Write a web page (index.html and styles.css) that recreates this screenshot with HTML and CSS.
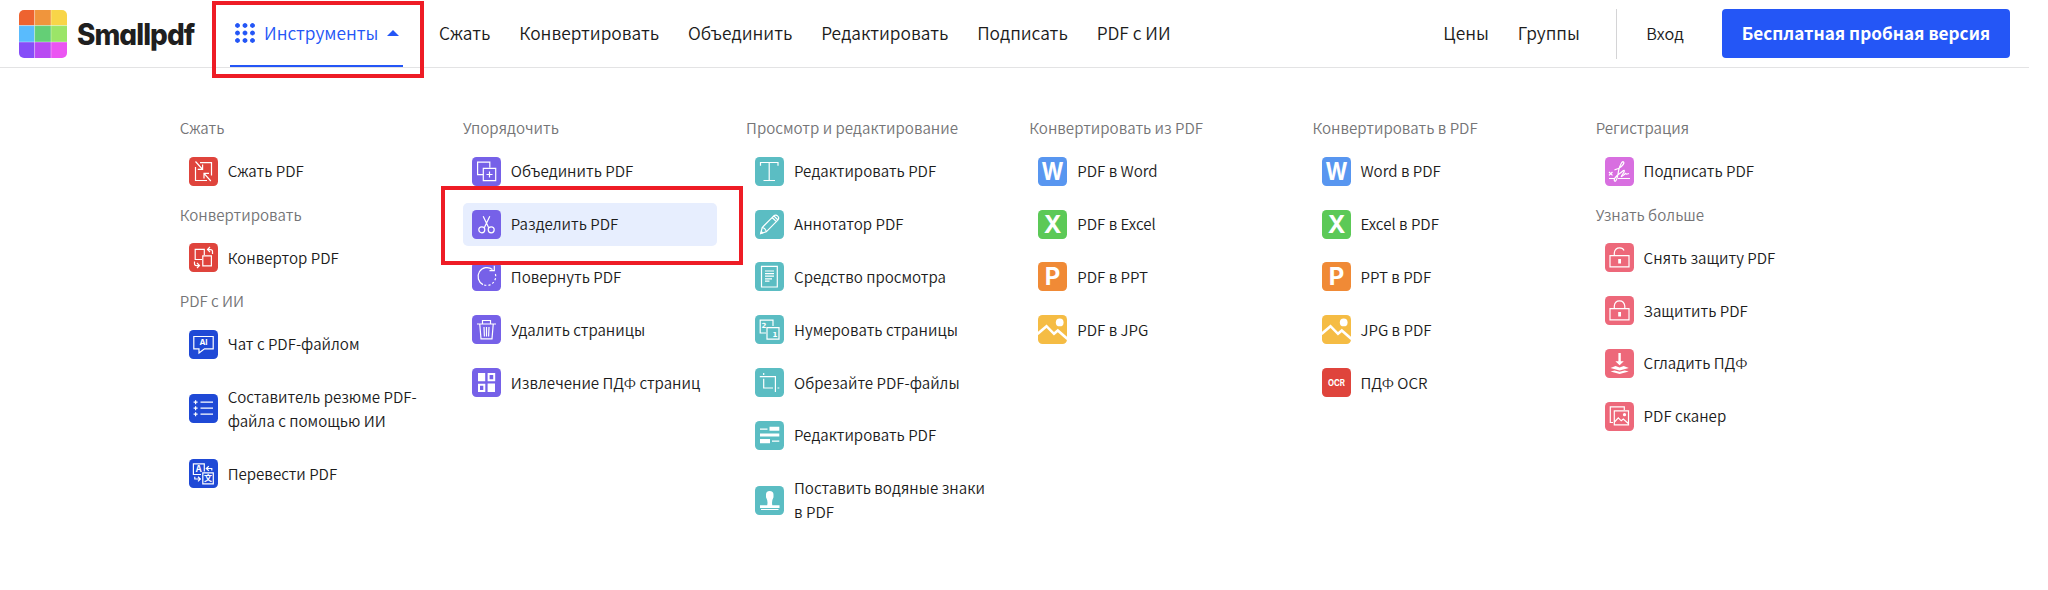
FILE: index.html
```
<!DOCTYPE html>
<html lang="ru">
<head>
<meta charset="utf-8">
<title>Smallpdf</title>
<link rel="stylesheet" href="styles.css">
</head>
<body>
<svg class="sprite" aria-hidden="true">
  <symbol id="compress" viewBox="0 0 29 29"><path d="M11 5.7H22.5V18.5M18 23.5H6.5V10M6.5 4.5L13.2 12M8.7 12.4H13.6V7.4M21.8 24L15.2 16.6M15 21.5V16.3H20"/></symbol>
  <symbol id="convert" viewBox="0 0 29 29"><path d="M13 16.5H6.2V6.3H15.3V12M13.8 12.8H22.4V22.8H13.8ZM23.5 11V8.5Q23.5 6.6 21.5 6.6H18.8M21 4L18.5 6.6L21 9M5.5 18.5V20.8Q5.5 22.6 7.5 22.6H10M8 20L10.5 22.6L8 25"/></symbol>
  <symbol id="chat" viewBox="0 0 29 29"><path d="M4.8 6.5H24.2V18.8H15.5L10 23V18.8H4.8Z"/><text x="14.5" y="15.4" class="g g-ai">AI</text></symbol>
  <symbol id="list" viewBox="0 0 29 29"><path d="M11.5 8.2H24M11.5 14.2H24M11.5 20.2H24M4.6 8.2H8.6M6.6 6.2V10.2M4.6 14.2H8.6M6.6 12.2V16.2M4.6 20.2H8.6M6.6 18.2V22.2"/></symbol>
  <symbol id="translate" viewBox="0 0 29 29"><path d="M12 15.5H4.4V4.8H15.3V12.4M13.8 13.8H24.3V24.8H13.8ZM22.8 11.4V9.5H17.5M19.8 7.2L17.3 9.5L19.8 11.8M5.8 17.8V20H11.2M9 17.7L11.4 20L9 22.4"/><text x="9.7" y="13.4" class="g g-tr">A</text><text x="19" y="22.4" class="g g-cjk">文</text></symbol>
  <symbol id="merge" viewBox="0 0 29 29"><path d="M11 17.7H5.6V5.2H17.8V10.5M11.3 11.3H23.7V23.7H11.3ZM14.5 17.5H20.5M17.5 14.5V20.5"/></symbol>
  <symbol id="split" viewBox="0 0 29 29"><path d="M11.2 6.2L16.7 17.8M17.8 6.2L12.3 17.8"/><circle cx="9.8" cy="19.8" r="3"/><circle cx="19.2" cy="19.8" r="3"/></symbol>
  <symbol id="rotate" viewBox="0 0 29 29"><path d="M11 22.6A9 9 0 1 1 20.5 7.4M22.3 3.8V8.6H17.5"/><path stroke-dasharray="2.2 2" d="M23.4 12A9 9 0 0 1 12 23"/></symbol>
  <symbol id="trash" viewBox="0 0 29 29"><path d="M5 9H24M10.5 8.5V5.5H18.5V8.5M7.8 9.5L9 23.8H20L21.2 9.5M12 12L12.4 21.5M14.5 12V21.5M17 12L16.6 21.5"/></symbol>
  <symbol id="extract" viewBox="0 0 29 29"><path class="fill" d="M6 5H13.2V13.2H6ZM15.6 15.6H23V24H15.6Z"/><path class="thick" d="M16.6 6H22.2V12.2H16.6ZM7 16.8H12.3V23H7Z"/></symbol>
  <symbol id="text" viewBox="0 0 29 29"><path d="M5.5 8.8V5.5H23V8.8M14.2 5.5V23.5M8.5 23.5H20"/></symbol>
  <symbol id="pencil" viewBox="0 0 29 29"><path d="M5.6 23.6L7.2 17.5L19 5.6Q21 4.2 22.8 6.2Q24.5 8 23 9.8L11.3 21.8ZM7.2 17.5Q10.5 18 11.3 21.8M17.2 7.5L21.3 11.6M18.8 5.8L23 10"/><path class="fill" d="M5.2 24L6.2 20.5L8.7 23Z"/></symbol>
  <symbol id="reader" viewBox="0 0 29 29"><path d="M6.5 4.4H22.3V25H6.5Z M10 9H19M10 11.6H19M10 14.2H19M10 16.8H17M10 19.2H14.5"/></symbol>
  <symbol id="number" viewBox="0 0 29 29"><path d="M11 18H5.2V5.2H18V11M12 12.6H24V24.2H12Z"/><text x="9" y="12.6" class="g g-n">2</text><text x="20" y="22.2" class="g g-n">1</text></symbol>
  <symbol id="crop" viewBox="0 0 29 29"><path d="M8.7 5V7M4.8 8.7H20.4V24M8.7 10.8V20H18M22.5 20H24.3"/></symbol>
  <symbol id="edit" viewBox="0 0 29 29"><path class="fill" d="M14.5 5.8H24.3V9.8H14.5ZM5 12.4H24.3V15.6H5ZM5 18H15V22.2H5ZM5 7.5H12.5V8.7H5ZM17 19.6H24.3V20.8H17Z"/></symbol>
  <symbol id="stamp" viewBox="0 0 29 29"><path class="fill" d="M5 22V19.2H12.2Q13.2 15 11 11.2V8.5Q11 5 14.6 5Q18.5 5 18.5 8.5V11.2Q16.4 15 17.3 19.2H24.5V22Z"/><path d="M6 23.5H23.5"/></symbol>
  <symbol id="word" viewBox="0 0 29 29"><text x="14.5" y="23" textLength="22" lengthAdjust="spacingAndGlyphs" class="g g-l">W</text></symbol>
  <symbol id="excel" viewBox="0 0 29 29"><text x="14.5" y="23" class="g g-l">X</text></symbol>
  <symbol id="ppt" viewBox="0 0 29 29"><text x="14.5" y="23" class="g g-l">P</text></symbol>
  <symbol id="jpg" viewBox="0 0 29 29"><circle class="fill" cx="21.7" cy="7.4" r="3.9"/><path class="ridge" d="M-.5 19L8.5 11.2L16 18.8L19.8 15.5L29.5 24"/></symbol>
  <symbol id="ocr" viewBox="0 0 29 29"><text x="14.5" y="18.2" textLength="17" lengthAdjust="spacingAndGlyphs" class="g g-ocr">OCR</text></symbol>
  <symbol id="sign" viewBox="0 0 29 29"><path d="M4 15L7.5 18.4M7.5 15L4 18.4M4 21.5H10M13 21.5H25M9.5 12.8C14 12 19.5 8 18.8 5.2C17.5 3 14.5 8.5 13.5 14C12.7 19.5 12.2 24.2 10 24.3C7.5 23 11.5 18.5 15 16.3C17.2 15 18 13.2 19.2 13.4C20.5 14.5 16 18.6 16.3 19.5C17.3 20.2 20.5 15.5 21 16.6C21.2 17.8 22.5 17 24 16.5"/></symbol>
  <symbol id="unlock" viewBox="0 0 29 29"><path d="M5 12.7H24V23.8H5ZM9.3 12.5V10Q9.8 4.8 14.7 4.8Q18 4.8 19 7.5"/><path class="fill" d="M13.2 16H16V20.5H13.2Z"/></symbol>
  <symbol id="lock" viewBox="0 0 29 29"><path d="M5 12.7H24V23.8H5ZM9.3 12.5V10Q9.8 4.8 14.5 4.8Q19.2 4.8 19.8 10V12.5"/><path class="fill" d="M13.2 16H16V20.5H13.2Z"/></symbol>
  <symbol id="flatten" viewBox="0 0 29 29"><path class="fill" d="M13.4 4H15.8V12.2H18.8L14.6 16.3L10.4 12.2H13.4ZM5.5 19L10.5 16.9L14.6 18.6L18.7 16.9L23.8 19L14.6 21.6ZM5.5 22.5L9.5 21.4L14.6 22.8L19.7 21.4L23.8 22.5L14.6 25Z"/></symbol>
  <symbol id="scan" viewBox="0 0 29 29"><path d="M8 20.5H5.3V4.8H19.3V8M9.3 8.8H23.5V22.8H9.3ZM9.5 20L13.3 15.8L16.2 18.8L18.3 17L23.3 21.5"/><circle class="fill" cx="19.5" cy="12.7" r="1.6"/></symbol>
</svg>

<header class="header">
  <div class="brand">
    <svg class="logo" viewBox="0 0 48 48">
      <path fill="#ee6330" d="M0 0H15.6V15.6H0z"/><path fill="#f0953c" d="M15.6 0H32V15.6H15.6z"/><path fill="#f8d548" d="M32 0H48V15.6H32z"/>
      <path fill="#59bbfd" d="M0 15.6H15.6V32H0z"/><path fill="#64cf76" d="M15.6 15.6H32V32H15.6z"/><path fill="#9be568" d="M32 15.6H48V32H32z"/>
      <path fill="#864ef8" d="M0 32H15.6V48H0z"/><path fill="#b94af2" d="M15.6 32H32V48H15.6z"/><path fill="#eb55f2" d="M32 32H48V48H32z"/>
      <path stroke="#fff" stroke-opacity=".45" stroke-width=".8" d="M15.6 0V48M32 0V48M0 15.6H48M0 32H48"/>
    </svg>
    <span class="wordmark">Smallpdf</span>
  </div>
  <div class="callout callout-tab">
    <a class="tab">
      <svg class="dots" viewBox="0 0 20 20"><path d="M2.5 1.9v1.2M10 1.9v1.2M17.5 1.9v1.2M2.5 9.4v1.2M10 9.4v1.2M17.5 9.4v1.2M2.5 16.9v1.2M10 16.9v1.2M17.5 16.9v1.2M1.9 2.5h1.2M9.4 2.5h1.2M16.9 2.5h1.2M1.9 10h1.2M9.4 10h1.2M16.9 10h1.2M1.9 17.5h1.2M9.4 17.5h1.2M16.9 17.5h1.2"/></svg>
      <span>Инструменты</span>
      <svg class="caret" viewBox="0 0 12 6"><path d="M0 6L6 0L12 6Z"/></svg>
    </a>
  </div>
  <nav class="nav">
    <a>Сжать</a><a>Конвертировать</a><a>Объединить</a><a>Редактировать</a><a>Подписать</a><a>PDF с ИИ</a>
  </nav>
  <div class="account">
    <a>Цены</a><a>Группы</a><span class="divider"></span><a class="login">Вход</a><a class="cta">Бесплатная пробная версия</a>
  </div>
</header>

<main class="menu">
  <section class="col">
    <h2>Сжать</h2>
    <a class="item"><svg class="icon red"><use href="#compress"/></svg><span>Сжать PDF</span></a>
    <h2>Конвертировать</h2>
    <a class="item"><svg class="icon red"><use href="#convert"/></svg><span>Конвертор PDF</span></a>
    <h2>PDF с ИИ</h2>
    <a class="item"><svg class="icon navy"><use href="#chat"/></svg><span>Чат с PDF-файлом</span></a>
    <a class="item"><svg class="icon navy"><use href="#list"/></svg><span>Составитель резюме PDF-<br>файла с помощью ИИ</span></a>
    <a class="item"><svg class="icon navy"><use href="#translate"/></svg><span>Перевести PDF</span></a>
  </section>
  <section class="col">
    <h2>Упорядочить</h2>
    <a class="item"><svg class="icon violet"><use href="#merge"/></svg><span>Объединить PDF</span></a>
    <a class="item active"><svg class="icon violet"><use href="#split"/></svg><span>Разделить PDF</span><i class="callout callout-item"></i></a>
    <a class="item"><svg class="icon violet"><use href="#rotate"/></svg><span>Повернуть PDF</span></a>
    <a class="item"><svg class="icon violet"><use href="#trash"/></svg><span>Удалить страницы</span></a>
    <a class="item"><svg class="icon violet"><use href="#extract"/></svg><span>Извлечение ПДФ страниц</span></a>
  </section>
  <section class="col">
    <h2>Просмотр и редактирование</h2>
    <a class="item"><svg class="icon teal"><use href="#text"/></svg><span>Редактировать PDF</span></a>
    <a class="item"><svg class="icon teal"><use href="#pencil"/></svg><span>Аннотатор PDF</span></a>
    <a class="item"><svg class="icon teal"><use href="#reader"/></svg><span>Средство просмотра</span></a>
    <a class="item"><svg class="icon teal"><use href="#number"/></svg><span>Нумеровать страницы</span></a>
    <a class="item"><svg class="icon teal"><use href="#crop"/></svg><span>Обрезайте PDF-файлы</span></a>
    <a class="item"><svg class="icon teal"><use href="#edit"/></svg><span>Редактировать PDF</span></a>
    <a class="item"><svg class="icon teal"><use href="#stamp"/></svg><span>Поставить водяные знаки<br>в PDF</span></a>
  </section>
  <section class="col">
    <h2>Конвертировать из PDF</h2>
    <a class="item"><svg class="icon blue"><use href="#word"/></svg><span>PDF в Word</span></a>
    <a class="item"><svg class="icon green"><use href="#excel"/></svg><span>PDF в Excel</span></a>
    <a class="item"><svg class="icon orange"><use href="#ppt"/></svg><span>PDF в PPT</span></a>
    <a class="item"><svg class="icon yellow"><use href="#jpg"/></svg><span>PDF в JPG</span></a>
  </section>
  <section class="col">
    <h2>Конвертировать в PDF</h2>
    <a class="item"><svg class="icon blue"><use href="#word"/></svg><span>Word в PDF</span></a>
    <a class="item"><svg class="icon green"><use href="#excel"/></svg><span>Excel в PDF</span></a>
    <a class="item"><svg class="icon orange"><use href="#ppt"/></svg><span>PPT в PDF</span></a>
    <a class="item"><svg class="icon yellow"><use href="#jpg"/></svg><span>JPG в PDF</span></a>
    <a class="item"><svg class="icon red"><use href="#ocr"/></svg><span>ПДФ OCR</span></a>
  </section>
  <section class="col">
    <h2>Регистрация</h2>
    <a class="item"><svg class="icon orchid"><use href="#sign"/></svg><span>Подписать PDF</span></a>
    <h2>Узнать больше</h2>
    <a class="item"><svg class="icon pink"><use href="#unlock"/></svg><span>Снять защиту PDF</span></a>
    <a class="item"><svg class="icon pink"><use href="#lock"/></svg><span>Защитить PDF</span></a>
    <a class="item"><svg class="icon pink"><use href="#flatten"/></svg><span>Сгладить ПДФ</span></a>
    <a class="item"><svg class="icon pink"><use href="#scan"/></svg><span>PDF сканер</span></a>
  </section>
</main>
</body>
</html>
```
FILE: styles.css
```
* { box-sizing: border-box; }
body {
  margin: 0;
  height: 590px;
  background: #fff;
  color: #1c1c1c;
  font-family: "Noto Sans CJK SC", "Noto Sans", sans-serif;
  font-size: 15.12px;
  font-weight: 350;
  line-height: 24px;
  overflow: hidden;
}
.sprite { display: none; }

/* Top bar */
.header {
  display: flex;
  width: 2029px;
  height: 68px;
  padding: 0 19px;
  border-bottom: 1px solid #e3e3e4;
  font-size: 17.35px;
}
.brand { display: flex; width: 193px; height: 67px; align-items: center; }
.logo { width: 48px; height: 48px; border-radius: 5px; flex: none; }
.wordmark {
  margin-left: 9.5px;
  font: 800 29.5px/40px Inter, sans-serif;
  font-feature-settings: "cv11";
  letter-spacing: -1px;
  color: #1f1f1f;
  transform: scaleX(.945);
  transform-origin: left center;
}
.callout { border: 4px solid #ee1c25; }
.callout-tab { width: 212px; height: 77px; margin-top: 1px; padding: 0 17px 0 14px; flex: none; }
.tab {
  display: flex;
  align-items: center;
  height: 62px;
  padding: 0 4px 5px 5px;
  border-bottom: 2px solid #2456f6;
  color: #2456f6;
}
.dots { width: 20px; height: 20px; margin-right: 9px; fill: none; stroke: #2456f6; stroke-width: 3.8; stroke-linecap: round; }
.caret { width: 12px; height: 6px; margin-left: auto; fill: #2456f6; }
.nav { display: flex; gap: 28.8px; margin-left: 15px; padding-top: 21px; white-space: nowrap; }
.account { display: flex; align-items: center; height: 67px; margin-left: auto; white-space: nowrap; }
.account > a:not(.cta) { padding-bottom: 2px; }
.account a + a { margin-left: 29px; }
.divider { width: 1px; height: 50px; margin-left: 36.5px; background: #d4d4d6; }
.account .login { margin-left: 29px; font-size: 16.3px; }
.account .cta {
  width: 288px;
  height: 49px;
  margin-left: 38.3px;
  border-radius: 4px;
  background: #2456f6;
  color: #fff;
  font-size: 17.15px;
  font-weight: 700;
  line-height: 48px;
  text-align: center;
}

/* Tools menu */
.menu { display: grid; grid-template-columns: repeat(6, 283.2px); padding: 48.2px 0 0 179.7px; }
.col { display: flex; flex-direction: column; gap: 9.6px; width: 254px; }
h2 { margin: -1px 0 1px; color: #757577; font-size: inherit; font-weight: inherit; line-height: 24px; white-space: nowrap; }
.item { display: flex; align-items: center; position: relative; padding: 9.6px 9.2px; border-radius: 5px; white-space: nowrap; }
.item > span { margin: -1px 0 1px 9.8px; }
.active { background: #e7eefe; }
.callout-item { position: absolute; left: -22px; top: -16.6px; width: 302px; height: 79px; z-index: 1; }

/* Icons */
.icon { width: 29px; height: 29px; margin: -2.5px 0; flex: none; border-radius: 4.5px; fill: none; stroke: #fff; stroke-width: 1.2; }
.fill { fill: #fff; stroke: none; }
.thick { stroke-width: 2; }
.ridge { stroke-width: 2.6; }
.g { fill: #fff; stroke: none; text-anchor: middle; font-family: Inter, sans-serif; font-weight: 700; }
.g-ai { font-size: 8px; }
.g-tr { font-size: 8.5px; }
.g-cjk { font: 700 8px "Noto Sans CJK SC", sans-serif; }
.g-n { font: 700 7px "DejaVu Sans", sans-serif; }
.g-l { font-size: 24px; }
.g-ocr { font-size: 8.5px; }
.red { background: #df443c; }
.navy { background: #1f49d6; }
.violet { background: #7661e8; }
.teal { background: #5bbdc3; }
.blue { background: #5896f0; }
.green { background: #5cc957; }
.orange { background: #f08a36; }
.yellow { background: #f5bc44; }
.orchid { background: #d86fe0; }
.pink { background: #ed687a; }
```
